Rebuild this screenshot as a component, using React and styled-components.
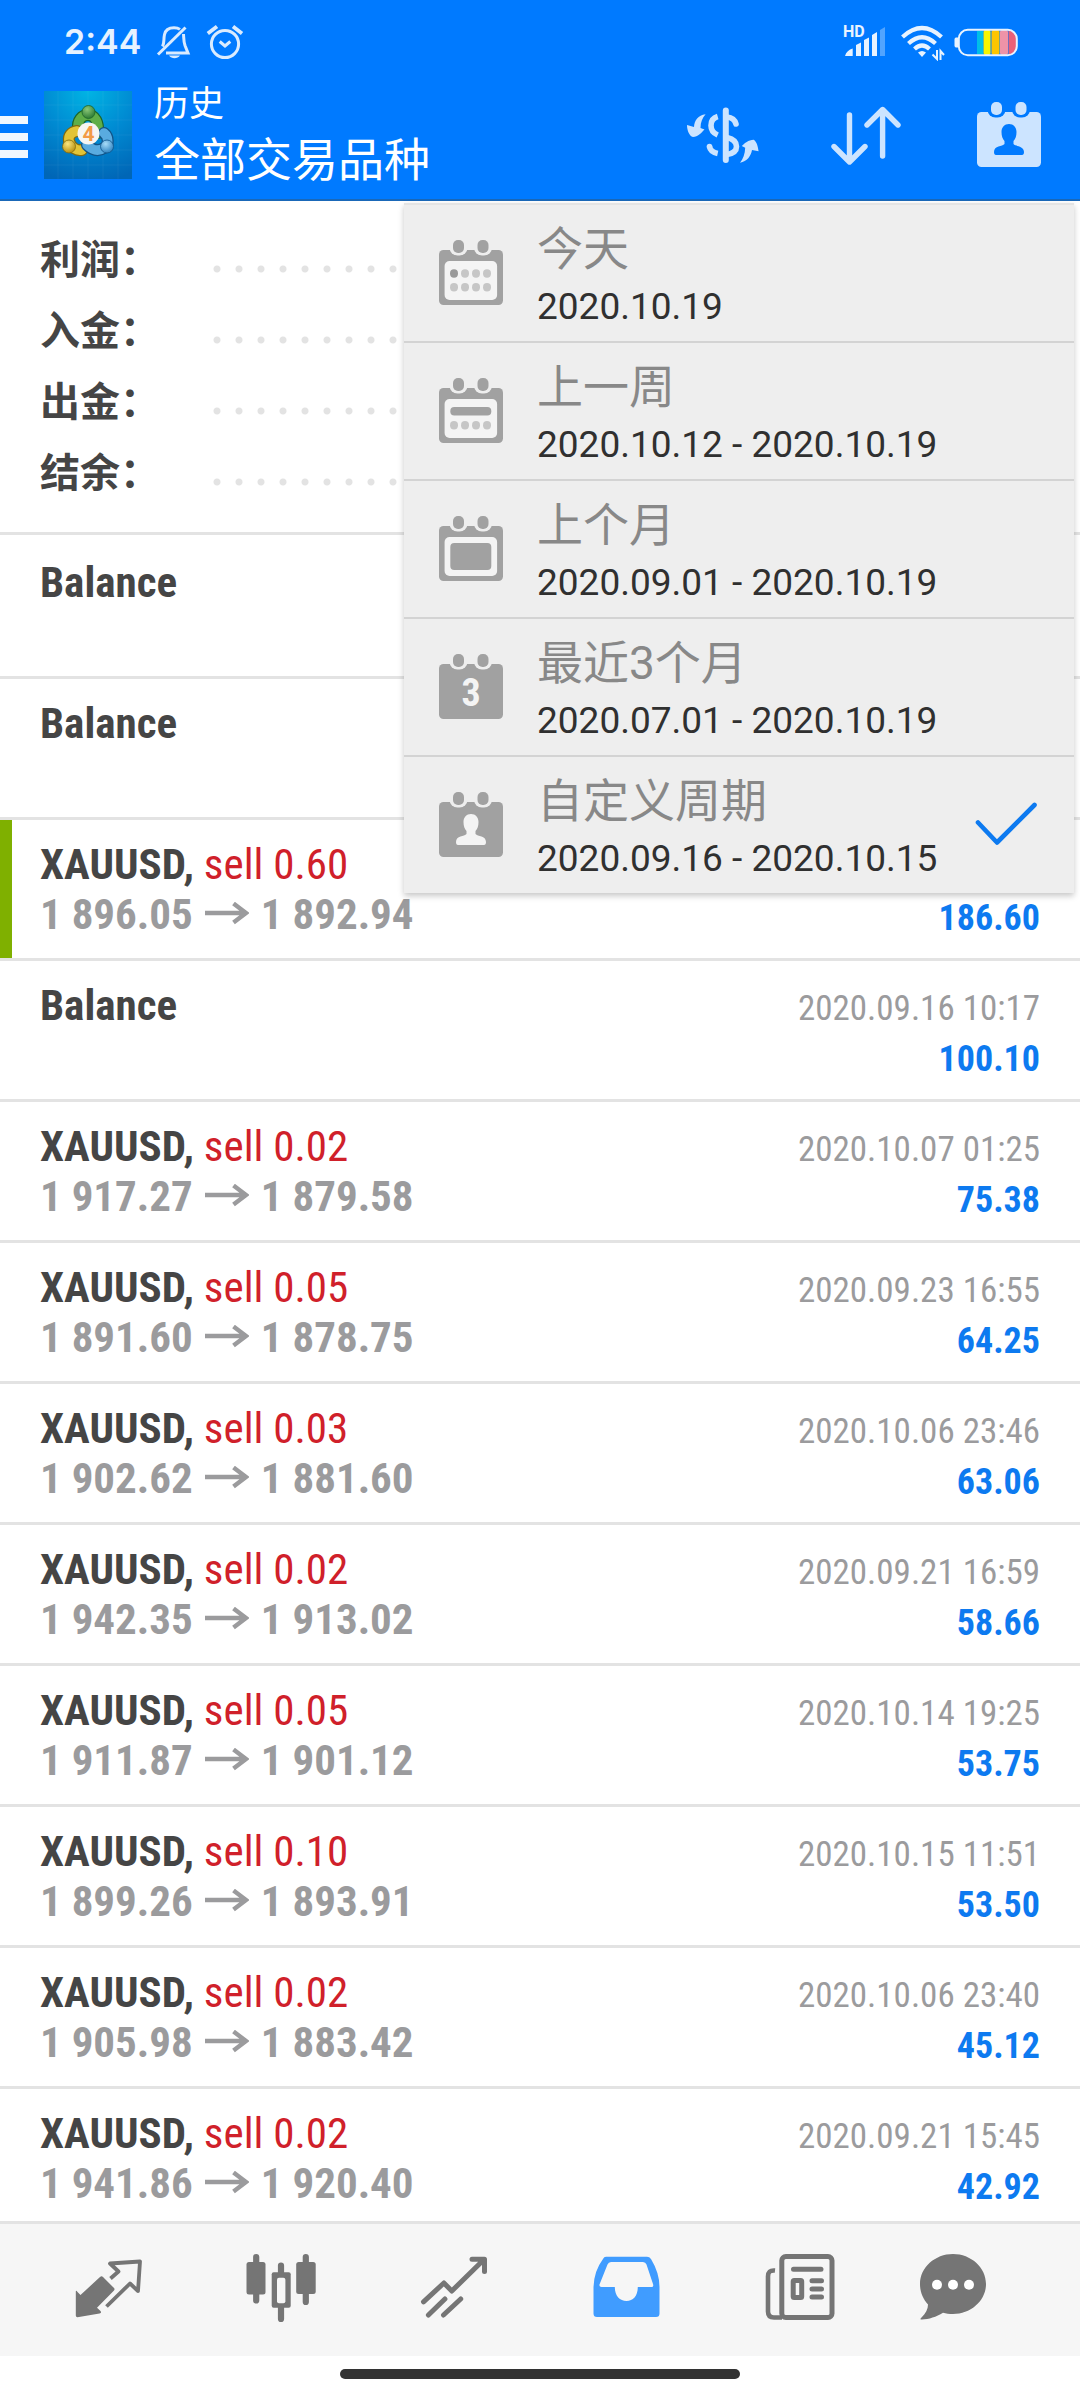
import React from 'react';
import styled, { createGlobalStyle, css } from 'styled-components';

const color = {
  blue: '#007aff',
  blueEdge: '#1a68b8',
  onBlue: '#cce4ff',
  text: '#454545',
  muted: '#9b9b9d',
  sell: '#d0202a',
  amount: '#0d7af0',
  line: '#e3e3e3',
  panel: '#eeeeee',
  nav: '#f6f6f6',
  icon: '#757575',
};

const GlobalStyle = createGlobalStyle`
  *, *::before, *::after { box-sizing: border-box; }
  body {
    margin: 0;
    background: #fff;
    color: ${color.text};
    font-family: Roboto, "Noto Sans CJK SC", sans-serif;
  }
  button { margin: 0; padding: 0; border: 0; background: none; font: inherit; color: inherit; cursor: pointer; }
  svg { display: block; flex: none; }
  ul, dl, dd { margin: 0; padding: 0; list-style: none; }
`;

const Screen = styled.div`
  display: flex;
  flex-direction: column;
  height: 100vh;
`;

const Header = styled.header`
  flex: none;
  background: ${color.blue};
  border-bottom: 2px solid ${color.blueEdge};
  color: #fff;
`;

const StatusBar = styled.div`
  display: flex;
  align-items: center;
  justify-content: space-between;
  height: 71px;
  padding: 12px 60px 0 64px;
`;

const StatusGroup = styled.div`
  display: flex;
  align-items: center;
  gap: ${(p) => p.$gap}px;
`;

const Clock = styled.time`
  font: 600 34px/40px Inter, sans-serif;
  color: #e6f2ff;
`;

const Toolbar = styled.div`
  display: flex;
  align-items: center;
  height: 128px;
`;

const MenuButton = styled.button`
  display: flex;
  flex-direction: column;
  gap: 9px;
  width: 44px;
  padding-top: 3px;

  span {
    width: 28px;
    height: 8px;
    background: #f0f7ff;
  }
`;

const Titles = styled.div`
  flex: 1;
  padding-left: 22px;
`;

const Subtitle = styled.div`
  font-size: 35px;
  line-height: 50px;
`;

const Title = styled.h1`
  margin: 0;
  font-size: 46px;
  font-weight: 400;
  line-height: 60px;
`;

const ToolButton = styled.button`
  display: flex;
  align-items: center;
  justify-content: center;
  width: 143px;
  height: 128px;
  color: ${color.onBlue};
`;

const Main = styled.main`
  position: relative;
  flex: 1;
  min-height: 0;
`;

const Scroller = styled.div`
  height: 100%;
  overflow-y: auto;
  scrollbar-width: none;
`;

const Summary = styled.dl`
  padding: 24px 40px 23px;
  border-bottom: 3px solid ${color.line};
`;

const SummaryRow = styled.div`
  display: flex;
  height: 71px;
`;

const SummaryLabel = styled.dt`
  width: 166px;
  font-size: 40px;
  font-weight: 700;
  line-height: 71px;
`;

const Leader = styled.dd`
  flex: 1;
  background: radial-gradient(circle at 11px 44px, ${color.line} 3px, transparent 4px) 0 0 / 22px 71px;
`;

const Deals = styled.ul`
  padding-top: 3px;
`;

const Deal = styled.li`
  display: flex;
  align-items: baseline;
  justify-content: space-between;
  height: 141px;
  padding: 19px 40px 0;
  border-bottom: 3px solid ${color.line};
  font-family: "Roboto Condensed", "Liberation Sans Narrow", Roboto, sans-serif;
  line-height: 50px;
  ${(p) => p.$marked && css`box-shadow: inset 12px 0 #7fb000;`}
`;

const DealName = styled.div`
  font-size: 43px;
  font-weight: 700;
`;

const Side = styled.span`
  font-weight: 400;
  color: ${color.sell};
`;

const Prices = styled.div`
  display: flex;
  align-items: center;
  gap: 12px;
  font-size: 43px;
  font-weight: 700;
  color: ${color.muted};
`;

const Result = styled.div`
  text-align: right;
`;

const DealTime = styled.div`
  font-size: 35px;
  color: ${color.muted};
`;

const Amount = styled.div`
  font-size: 36px;
  font-weight: 700;
  color: ${color.amount};
`;

const PeriodMenu = styled.div`
  position: absolute;
  top: 2px;
  right: 6px;
  width: 670px;
  max-width: calc(100% - 12px);
  background: ${color.panel};
  border-top: 2px solid #e4e4e4;
  box-shadow: 0 3px 6px rgba(0, 0, 0, 0.22);
`;

const PeriodItem = styled.button`
  display: flex;
  align-items: center;
  gap: 34px;
  width: 100%;
  padding: 10px 36px 10px 35px;
  text-align: left;

  & + & {
    border-top: 2px solid #d3d3d3;
  }
`;

const PeriodText = styled.span`
  display: flex;
  flex: 1;
  flex-direction: column;
`;

const PeriodName = styled.span`
  font-size: 46px;
  line-height: 68px;
  color: #888;
`;

const PeriodRange = styled.span`
  font-size: 37px;
  line-height: 48px;
  color: #303030;
  white-space: nowrap;
`;

const Nav = styled.nav`
  display: grid;
  grid-template-columns: repeat(5, 173fr) 133fr;
  flex: none;
  height: 135px;
  padding: 0 61px 4px 21px;
  border-top: 3px solid ${color.line};
  background: ${color.nav};
`;

const NavButton = styled.button`
  display: flex;
  align-items: center;
  justify-content: center;
  color: ${(p) => (p.$active ? '#409cff' : color.icon)};
`;

const HomeArea = styled.div`
  display: flex;
  flex: none;
  justify-content: center;
  padding: 13px 0 21px;
  background: #fff;
`;

const HomeBar = styled.div`
  width: 37%;
  height: 10px;
  border-radius: 5px;
  background: #333;
`;

const BellOff = () => (
  <svg width="36" height="36" viewBox="0 0 36 36" fill="none" stroke="#d9ebff" strokeWidth="3">
    <path d="M7.500 22.500C9.500 19 8.500 15 9.500 10.500C10.500 5.500 14 3.700 19 3.700C21.500 3.700 23.500 4.300 25 5.400M28.500 10C28.800 14 28.600 17.500 30 21.500L33 29H11" />
    <path d="M3 30.500L30.500 3.500" />
    <path d="M14 31.500C16.500 35 22.500 35 25 31.500Z" fill="#d9ebff" stroke="none" />
  </svg>
);

const Alarm = () => (
  <svg width="40" height="36" viewBox="0 0 40 36" fill="none" stroke="#d9ebff" strokeWidth="3">
    <circle cx="20" cy="20" r="13.600" />
    <path d="M14.700 17.500L20 22L25.300 17.500" />
    <path d="M2.800 9.500L12 2.500M28 2.500L37 9.500" strokeWidth="3.800" />
  </svg>
);

const Signal = () => (
  <svg width="50" height="44" viewBox="0 -4 50 44" fill="#e8f3ff">
    <text x="1" y="13" fontFamily="Roboto, sans-serif" fontSize="16" fontWeight="700">HD</text>
    <path d="M3 32C4 28 7 25.500 10.700 24.500V32ZM14 32V21L19 18.500V32ZM22 32V16L27 13.500V32ZM30 32V11L35 8V32Z" />
    <path d="M38 32V6L43 3V32Z" opacity="0.350" />
  </svg>
);

const Wifi = () => (
  <svg width="48" height="38" viewBox="0 0 48 38" fill="none" stroke="#e8f3ff" strokeWidth="4.200">
    <path d="M4.500 14Q24 -4 43.500 14M10.500 20.500Q24 8 37.500 20.500M16.500 26Q24 19 31.500 26" />
    <path d="M20 29.500Q24 26.500 28 29.500L24 34Z" fill="#e8f3ff" stroke="none" />
    <path d="M39 27V36L34.500 31.500M42.500 37V28L46 32" strokeWidth="2" />
  </svg>
);

const Battery = () => (
  <svg width="68" height="34" viewBox="0 0 68 34">
    <path d="M6 12.500H4Q2.500 12.500 2.500 14.500V20.500Q2.500 22.500 4 22.500H6Z" fill="#e8f3ff" />
    <rect x="25" y="6" width="6" height="23" fill="#00bfe8" />
    <rect x="31.500" y="5" width="7" height="25" rx="2" fill="#f6f500" />
    <rect x="39.500" y="5" width="8" height="25" rx="2" fill="#fdc500" />
    <rect x="48" y="5" width="8" height="25" rx="2" fill="#ee93a8" />
    <path d="M56.500 5.500H58Q64.500 7 64.500 13V22Q64.500 28 58 29.500H56.500Z" fill="#ea6079" />
    <rect x="6.800" y="4.800" width="58" height="25.500" rx="9" fill="none" stroke="#e8f3ff" strokeWidth="2" />
  </svg>
);

const AppLogo = () => (
  <svg width="88" height="88" viewBox="0 0 88 88">
    <defs>
      <radialGradient id="tile" cx="0.500" cy="0" r="1.050">
        <stop offset="0" stopColor="#00b4e4" />
        <stop offset="0.500" stopColor="#008ad2" />
        <stop offset="1" stopColor="#0066b6" />
      </radialGradient>
      <radialGradient id="green" cx="0.400" cy="0.300" r="0.800"><stop offset="0" stopColor="#8cc878" /><stop offset="1" stopColor="#1f702a" /></radialGradient>
      <radialGradient id="yellow" cx="0.400" cy="0.300" r="0.800"><stop offset="0" stopColor="#fbe680" /><stop offset="1" stopColor="#b08600" /></radialGradient>
      <radialGradient id="sky" cx="0.400" cy="0.300" r="0.800"><stop offset="0" stopColor="#a8dcf8" /><stop offset="1" stopColor="#1f78ba" /></radialGradient>
    </defs>
    <rect width="88" height="88" fill="url(#tile)" />
    <path d="M14 0V88M29 0V88M44 0V88M59 0V88M74 0V88M0 14H88M0 29H88M0 44H88M0 59H88M0 74H88" stroke="#fff" strokeOpacity="0.050" />
    <g fill="none" strokeLinecap="round">
      <path d="M34 38C33 29 38 24 44 24C51 24 55 31 54 42" stroke="#1c6428" strokeWidth="12" />
      <path d="M34 38C33 29 38 24 44 24C51 24 55 31 54 42" stroke="#5fae48" strokeWidth="9.500" />
      <path d="M33 40C27 41 24 45 25 50C27 57 33 60 38 59" stroke="#806a10" strokeWidth="12" />
      <path d="M33 40C27 41 24 45 25 50C27 57 33 60 38 59" stroke="#e2c436" strokeWidth="9.500" />
      <path d="M60 42C65 46 65 54 60 57C54 61 48 59 43 54" stroke="#125488" strokeWidth="12" />
      <path d="M60 42C65 46 65 54 60 57C54 61 48 59 43 54" stroke="#59abe0" strokeWidth="9.500" />
    </g>
    <circle cx="44.500" cy="21" r="6.500" fill="url(#green)" stroke="#1c6428" strokeWidth="0.800" />
    <circle cx="25" cy="55.500" r="6.500" fill="url(#yellow)" stroke="#806a10" strokeWidth="0.800" />
    <circle cx="63" cy="55.500" r="6.500" fill="url(#sky)" stroke="#125488" strokeWidth="0.800" />
    <circle cx="44.500" cy="42.500" r="11" fill="#f6f5f2" />
    <text x="44.500" y="50" textAnchor="middle" fontFamily="Roboto, sans-serif" fontSize="21" fontWeight="700" fill="#f39a45">4</text>
  </svg>
);

const CurrencySwap = () => (
  <svg width="84" height="66" viewBox="0 0 84 66" fill="none" stroke="currentColor" strokeWidth="5.600">
    <path d="M44.800 8.500V58" strokeLinecap="round" strokeWidth="6" />
    <path d="M36.700 14.500C31.500 16 30 19.500 30 23.500C30 28 32 31 36.700 33" />
    <path d="M46 15C51 15.500 54 18 55 22" strokeLinecap="round" />
    <path d="M46 35.500C52.500 37 55.500 40 55.500 44.500C55.500 49 52.500 51.500 46 52.500" />
    <path d="M28.500 44.500C29 48.500 32 50.500 36.700 51.500" />
    <circle cx="28.500" cy="44.500" r="2.800" fill="currentColor" stroke="none" />
    <g fill="currentColor" stroke="none">
      <path d="M24.600 12.300C17 13.500 13.500 18 13 25L6 23C6 28 8 34 12 35C17 35 20 31 23.500 27.500L19.500 26C19.500 20 21.500 16 24.600 12.300Z" />
      <path d="M59 60.700C62 57 64 52 64.200 45.700L60.800 44C64 41 67 38 72.800 37.700C76 40 77 45 77.600 49.300L71 48C70 54 66 59.500 59 60.700Z" />
    </g>
  </svg>
);

const SortArrows = () => (
  <svg width="70" height="68" viewBox="0 0 70 68" fill="none" stroke="currentColor" strokeWidth="5.400" strokeLinecap="round" strokeLinejoin="round">
    <path d="M18.500 14V60M3 45.500L18.500 61L34 45.500" />
    <path d="M51.600 55V9M36 24L51.600 8.500L67 24" />
  </svg>
);

const Person = ({ fill }) => (
  <path
    fill={fill}
    d="M32 22C36.500 22 39.500 25.500 39.500 30C39.500 34 38.500 37 36.500 39V42C38.500 44.500 47 43.500 47 50Q47 53 45 53H19Q17 53 17 50C17 43.500 25.500 44.500 27.500 42V39C25.500 37 24.500 34 24.500 30C24.500 25.500 27.500 22 32 22Z"
  />
);

const Calendar = ({ kind, back, fill }) => (
  <svg width="64" height="66" viewBox="0 0 64 66">
    <rect y="10" width="64" height="55" rx="4.500" fill={fill} />
    {[19.5, 44].map((x) => (
      <g key={x}>
        <rect x={x - 9} y="-4" width="18" height="19.500" rx="8" fill={back} />
        <rect x={x - 5.5} width="11" height="13" rx="5" fill={fill} />
      </g>
    ))}
    {(kind === 'day' || kind === 'week' || kind === 'month') && (
      <rect x="5.600" y="21" width="52.500" height="39" rx="5" fill="#f4f4f4" />
    )}
    {kind === 'day' && [15, 26, 37, 48].map((x) => (
      <ellipse key={x} cx={x} cy="33.500" rx="4" ry="4.200" fill={x === 15 ? '#999' : '#c6c6c6'} />
    ))}
    {kind === 'week' && <rect x="11.300" y="29" width="41" height="8.500" rx="4" fill={fill} />}
    {(kind === 'day' || kind === 'week') && [15, 26, 37, 48].map((x) => (
      <ellipse key={x} cx={x} cy="47.300" rx="4" ry="4.200" fill="#c6c6c6" />
    ))}
    {kind === 'month' && <rect x="11.300" y="27" width="41" height="27" rx="4" fill={fill} />}
    {kind === 'quarter' && (
      <text x="32" y="52" textAnchor="middle" fontFamily="Roboto Condensed, Roboto, sans-serif" fontSize="38" fontWeight="700" fill="#f4f4f4">3</text>
    )}
    {kind === 'custom' && <Person fill={back === color.blue ? back : '#f4f4f4'} />}
  </svg>
);

const Check = () => (
  <svg width="64" height="46" viewBox="0 0 64 46" fill="none" stroke={color.amount} strokeWidth="4.600" strokeLinecap="round" strokeLinejoin="round">
    <path d="M4 20.500L23 40.500L60.500 3" />
  </svg>
);

const PriceArrow = () => (
  <svg width="44" height="24" viewBox="0 0 44 24" fill="none" stroke="currentColor" strokeWidth="4.400">
    <path d="M0 11H41M28.500 1.500L41 11L28.500 20.500" />
  </svg>
);

const navIcons = {
  quotes: (
    <>
      <path d="M3.800 39.500Q4 38 5.500 40L8.500 43L28 25Q29.600 23.500 31 25L42 36Q43 37 42 38.500L25 55.700L28.500 59Q30 61 27.500 61.500L5.500 65.300Q3.800 65.300 3.800 63.500Z" fill="currentColor" />
      <path d="M38.500 26.500L46.500 19.500L38 11.500L68 9.500L66 39L58 31.500L34.500 54.500" fill="none" stroke="currentColor" strokeWidth="3.800" strokeLinejoin="round" />
    </>
  ),
  charts: (
    <>
      <path d="M11.200 5V48.500M36 13.500V67M60.800 5V50" stroke="currentColor" strokeWidth="6.200" strokeLinecap="round" />
      <rect x="1.500" y="10" width="19" height="32.500" rx="2.500" fill="currentColor" />
      <rect x="51.200" y="10" width="19.500" height="32" rx="2.500" fill="currentColor" />
      <rect x="26.700" y="20.300" width="19" height="35.500" rx="2" fill="currentColor" />
      <rect x="32" y="25.700" width="8.400" height="25.500" rx="2" fill={color.nav} />
    </>
  ),
  trade: (
    <path d="M5.500 49.800L25.900 31L33.800 39L66 7.500M54 7.300H66.500V19.500M10.400 63L26.900 47M25.500 63L42.700 47" fill="none" stroke="currentColor" strokeWidth="5" strokeLinecap="round" strokeLinejoin="round" />
  ),
  history: (
    <path fillRule="evenodd" fill="currentColor" d="M15 4.700H56Q58.500 4.700 60 7Q68.500 21 68.500 35V61.500Q68.500 65 65 65H6Q2.500 65 2.500 61.500V35Q3 19 12 7Q13 4.700 15 4.700ZM20 10Q17.500 10 16.500 12.500L8.500 32.500Q8 35 10.500 35H23.800C23.800 44 29 49 35.500 49C42 49 46.800 44 46.800 35H60.500Q63 35 62 32L55.500 12.500Q54.500 10 52 10Z" />
  ),
  news: (
    <>
      <rect x="17.800" y="4.500" width="50.200" height="61" rx="4" fill="none" stroke="currentColor" strokeWidth="5" />
      <path d="M11 18.500C6 18 4 20 4 24.500V59.500C4 63.500 6 65.500 10 65.500H18" fill="none" stroke="currentColor" strokeWidth="4.600" />
      <path d="M29.500 17.300H57M48 28.700H57.500M48 36.900H57.500M48 45.100H57.500" stroke="currentColor" strokeWidth="5" strokeLinecap="round" />
      <rect x="29.200" y="28.500" width="8.500" height="17" rx="1" fill="none" stroke="currentColor" strokeWidth="5" />
    </>
  ),
  chat: (
    <>
      <path d="M36 2C54 2 69 15.500 69 32C69 48.500 54 62 36 62C32 62 29 61.700 26 60.800C19 65 11 67.800 4 67.500Q2.500 67.300 4.500 65.500C9 61 11 57 11 52.500C6 47 3 40 3 32C3 15.500 18 2 36 2Z" fill="currentColor" />
      <circle cx="20" cy="32.700" r="5" fill="#fff" />
      <circle cx="36" cy="32.700" r="5" fill="#fff" />
      <circle cx="52" cy="32.700" r="5" fill="#fff" />
    </>
  ),
};

const summary = ['利润', '入金', '出金', '结余'];

const periods = [
  { kind: 'day', name: '今天', range: '2020.10.19' },
  { kind: 'week', name: '上一周', range: '2020.10.12 - 2020.10.19' },
  { kind: 'month', name: '上个月', range: '2020.09.01 - 2020.10.19' },
  { kind: 'quarter', name: '最近3个月', range: '2020.07.01 - 2020.10.19' },
  { kind: 'custom', name: '自定义周期', range: '2020.09.16 - 2020.10.15', checked: true },
];

const deals = [
  {},
  {},
  { volume: '0.60', open: '1 896.05', close: '1 892.94', amount: '186.60', marked: true },
  { time: '2020.09.16 10:17', amount: '100.10' },
  { volume: '0.02', open: '1 917.27', close: '1 879.58', time: '2020.10.07 01:25', amount: '75.38' },
  { volume: '0.05', open: '1 891.60', close: '1 878.75', time: '2020.09.23 16:55', amount: '64.25' },
  { volume: '0.03', open: '1 902.62', close: '1 881.60', time: '2020.10.06 23:46', amount: '63.06' },
  { volume: '0.02', open: '1 942.35', close: '1 913.02', time: '2020.09.21 16:59', amount: '58.66' },
  { volume: '0.05', open: '1 911.87', close: '1 901.12', time: '2020.10.14 19:25', amount: '53.75' },
  { volume: '0.10', open: '1 899.26', close: '1 893.91', time: '2020.10.15 11:51', amount: '53.50' },
  { volume: '0.02', open: '1 905.98', close: '1 883.42', time: '2020.10.06 23:40', amount: '45.12' },
  { volume: '0.02', open: '1 941.86', close: '1 920.40', time: '2020.09.21 15:45', amount: '42.92' },
];

const tabs = [
  { id: 'quotes', label: '行情' },
  { id: 'charts', label: '图表' },
  { id: 'trade', label: '交易' },
  { id: 'history', label: '历史' },
  { id: 'news', label: '新闻' },
  { id: 'chat', label: '消息' },
];

function DealRow({ deal }) {
  return (
    <Deal $marked={deal.marked}>
      <div>
        <DealName>
          {deal.volume ? <>XAUUSD, <Side>sell {deal.volume}</Side></> : 'Balance'}
        </DealName>
        {deal.open && (
          <Prices>
            <span>{deal.open}</span>
            <PriceArrow />
            <span>{deal.close}</span>
          </Prices>
        )}
      </div>
      {deal.amount && (
        <Result>
          <DealTime>{deal.time || '\u00a0'}</DealTime>
          <Amount>{deal.amount}</Amount>
        </Result>
      )}
    </Deal>
  );
}

export default function App() {
  return (
    <Screen>
      <GlobalStyle />
      <Header>
        <StatusBar>
          <StatusGroup $gap={14}>
            <Clock>2:44</Clock>
            <BellOff />
            <Alarm />
          </StatusGroup>
          <StatusGroup $gap={6}>
            <Signal />
            <Wifi />
            <Battery />
          </StatusGroup>
        </StatusBar>
        <Toolbar>
          <MenuButton aria-label="菜单"><span /><span /><span /></MenuButton>
          <AppLogo />
          <Titles>
            <Subtitle>历史</Subtitle>
            <Title>全部交易品种</Title>
          </Titles>
          <ToolButton aria-label="交易品种"><CurrencySwap /></ToolButton>
          <ToolButton aria-label="排序"><SortArrows /></ToolButton>
          <ToolButton aria-label="周期"><Calendar kind="custom" back={color.blue} fill={color.onBlue} /></ToolButton>
        </Toolbar>
      </Header>
      <Main>
        <Scroller>
          <Summary>
            {summary.map((label) => (
              <SummaryRow key={label}>
                <SummaryLabel>{label}：</SummaryLabel>
                <Leader />
              </SummaryRow>
            ))}
          </Summary>
          <Deals>
            {deals.map((deal, i) => <DealRow key={i} deal={deal} />)}
          </Deals>
        </Scroller>
        <PeriodMenu>
          {periods.map((p) => (
            <PeriodItem key={p.kind}>
              <Calendar kind={p.kind} back={color.panel} fill="#a1a1a1" />
              <PeriodText>
                <PeriodName>{p.name}</PeriodName>
                <PeriodRange>{p.range}</PeriodRange>
              </PeriodText>
              {p.checked && <Check />}
            </PeriodItem>
          ))}
        </PeriodMenu>
      </Main>
      <Nav>
        {tabs.map((tab) => (
          <NavButton key={tab.id} $active={tab.id === 'history'} aria-label={tab.label}>
            <svg width="72" height="72" viewBox="0 0 72 72">{navIcons[tab.id]}</svg>
          </NavButton>
        ))}
      </Nav>
      <HomeArea><HomeBar /></HomeArea>
    </Screen>
  );
}
